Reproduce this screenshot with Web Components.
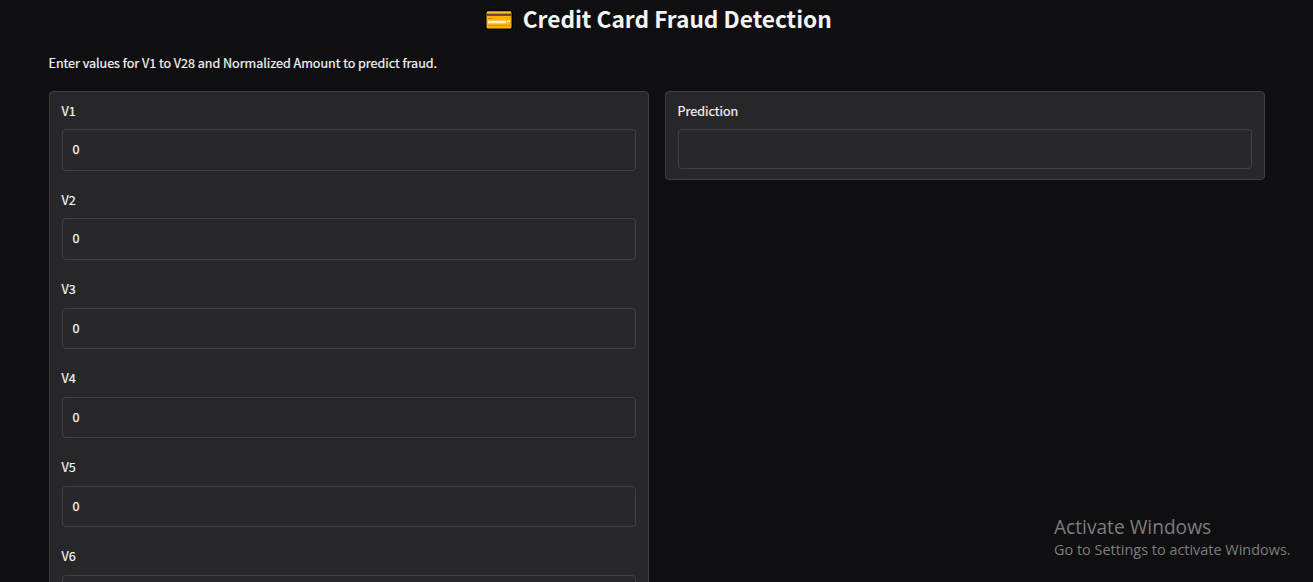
<!DOCTYPE html>
<html lang="en">
<head>
<meta charset="utf-8">
<title>Credit Card Fraud Detection</title>
<style>
html,body{margin:0;height:100%;overflow:hidden;background:#0f0f11}
body{font-family:"Noto Sans CJK SC","Noto Sans",sans-serif;color:#f4f4f5}
</style>
</head>
<body>
<fraud-app></fraud-app>
<script>
const define = (name, html) => customElements.define(name, class extends HTMLElement {
  constructor() {
    super();
    this.attachShadow({mode: 'open'}).innerHTML = html;
  }
});

define('card-icon', `<style>:host{display:block;width:28px;height:22px}svg{display:block}</style>
<svg width="28" height="22" viewBox="0 0 28 22">
<rect x="0" y="1" width="28" height="20" rx="3" fill="#000"/>
<rect x="1.5" y="2.5" width="25" height="17" rx="1.5" fill="#ffb300"/>
<path d="M2 2.6h24v2h-24z" fill="#ffca28"/>
<path d="M1.5 4.6h25v2.3h-25z" fill="#6d4037"/>
<path d="M3 9.5h4" stroke="#c98a16" stroke-width="1"/>
<path d="M3 13h18" stroke="#fff3cd" stroke-width="2.6"/>
<path d="M22 12.4h3" stroke="#fff3cd" stroke-width="1.6"/>
<path d="M3 16.5h22" stroke="#d79510" stroke-width="1"/>
</svg>`);

define('app-title', `<style>
:host{display:flex;justify-content:center;align-items:center;height:40px;gap:9.5px;padding-left:3px}
h1{margin:-2px 0 0;font-size:22.67px;line-height:36px;font-weight:700;white-space:nowrap}
</style><card-icon></card-icon><h1><slot></slot></h1>`);

define('form-panel', `<style>
:host{display:block;box-sizing:border-box;background:#27272a;border:1px solid #3f3f46;border-radius:4px;padding:8.75px 12px 10.25px}
</style><slot></slot>`);

define('form-field', `<style>
:host{display:block;height:89.1px}
:host([output]){height:68px}
label{display:block;font-size:12.6px;line-height:20px;height:28.6px;font-weight:400;margin-left:-.5px;-webkit-text-stroke:.2px}
.box{box-sizing:border-box;height:41.2px;border:1px solid #3f3f46;border-radius:4px;padding:0 9.5px;font-size:12.6px;line-height:38px;font-weight:400;-webkit-text-stroke:.25px}
:host([output]) .box{height:40px}
</style><label><slot name="label"></slot></label><div class="box"><slot></slot></div>`);

define('activation-notice', `<style>
:host{position:absolute;left:1054px;top:514px;font-family:"Open Sans","Noto Sans",sans-serif;color:#7d7d7e;white-space:nowrap}
.a{font-size:19.15px;line-height:26px}
.b{font-size:14.45px;line-height:20px}
</style><div class="a">Activate Windows</div><div class="b">Go to Settings to activate Windows.</div>`);

define('fraud-app', `<style>
:host{display:block;height:582px;overflow:hidden;padding:0 48px 0 49px}
p{margin:13px 0 18px -.5px;font-size:12.6px;line-height:20px;font-weight:400;white-space:nowrap;letter-spacing:-.03px;-webkit-text-stroke:.2px}
main{display:grid;grid-template-columns:600px 600px;gap:16px;align-items:start}
</style>
<app-title>Credit Card Fraud Detection</app-title>
<p>Enter values for V1 to V28 and Normalized Amount to predict fraud.</p>
<main><form-panel>${[1,2,3,4,5,6].map(n => `<form-field><span slot="label">V${n}</span>${n < 6 ? '0' : ''}</form-field>`).join('')}</form-panel>
<form-panel><form-field output><span slot="label">Prediction</span></form-field></form-panel></main>
<activation-notice></activation-notice>`);
</script>
</body>
</html>
